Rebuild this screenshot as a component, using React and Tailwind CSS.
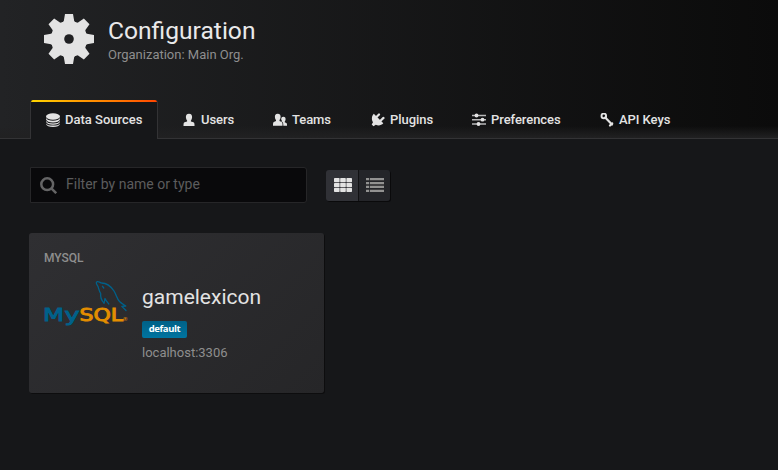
const ROBOTO = "font-['Roboto',sans-serif]";

function Gear() {
  const teeth = [0, 45, 90, 135, 180, 225, 270, 315];
  return (
    <svg className="size-[50px]" viewBox="-25 -25 50 50" fill="#e3e3e3">
      <mask id="hub">
        <rect x="-25" y="-25" width="50" height="50" fill="#fff" />
        <circle r="4.8" fill="#000" />
      </mask>
      <g mask="url(#hub)">
        <circle r="18" />
        {teeth.map((a) => (
          <path key={a} d="M-4-25H4L5.200-18Q6-16.500 8.500-15.500L0-8L-8.500-15.500Q-6-16.500-5.200-18Z" transform={`rotate(${a})`} />
        ))}
      </g>
    </svg>
  );
}

const ICON = "h-[14px] shrink-0 fill-[#e3e3e3]";

function DatabaseIcon() {
  return (
    <svg className={`${ICON} w-[14px]`} viewBox="0 0 14 14">
      <ellipse cx="7" cy="3.500" rx="7" ry="3.300" />
      <path d="M0 5Q1.600 7.700 7 7.700T14 5V6.300Q13 9.500 7 9.500T0 6.300ZM0 7.900Q1.600 10.400 7 10.400T14 7.900V8.800Q13 11.700 7 11.700T0 8.800ZM0 10.400Q1.600 12.600 7 12.600T14 10.400V11Q13 13.900 7 13.900T0 11Z" />
    </svg>
  );
}

function UserIcon() {
  return (
    <svg className={`${ICON} w-[12px]`} viewBox="0 0 12 14">
      <path d="M6 .7C8.400 .7 9.200 2.300 9.100 4.200C9 5.800 8.400 6.800 7.900 7.400V8.400L10.500 9.300Q11.500 9.700 11.500 11.700V13H.5V11.700Q.5 9.700 1.500 9.300L4.100 8.400V7.400C3.600 6.800 3 5.800 2.900 4.200C2.800 2.300 3.600 .7 6 .7Z" />
    </svg>
  );
}

function UsersIcon() {
  return (
    <svg className={`${ICON} w-[14px]`} viewBox="0 0 14 14">
      <path d="M4.700 .8C7 .8 7.700 2.300 7.600 4C7.500 5.600 7 6.500 6.500 7.100V8.100L8.700 9.100Q9.500 9.500 9.500 11.300V12.800H0V11.300Q0 9.500.8 9.100L3 8.100V7.100C2.500 6.500 2 5.600 1.900 4C1.800 2.300 2.500 .8 4.700 .8Z" />
      <path d="M10.300 3.700C12.200 3.700 12.700 5 12.600 6.300C12.500 7.600 12.100 8.200 11.700 8.700V9.300L13.300 10.100Q14 10.400 14 11.800V12.800H10.300V11.400Q10.300 9.300 9.200 8.800L8.200 8.200Q8.900 7.900 9.100 7.800Q8.300 7.300 8.200 6.300C8.100 5 8.700 3.700 10.300 3.700Z" />
    </svg>
  );
}

function PlugIcon() {
  return (
    <svg className={`${ICON} w-[14px]`} viewBox="0 0 14 14">
      <path d="M2.800 .8L12.300 10.300C10.300 12.800 6.900 12.700 4.800 11.800L2.500 13.300L.7 11.500L2 9.200C.5 7 .4 3.100 2.800 .8Z" />
      <path d="M5.200 4.300L8 1.500M9 8.200L12.500 4.900" stroke="#e3e3e3" strokeWidth="2.200" strokeLinecap="round" />
    </svg>
  );
}

function SlidersIcon() {
  return (
    <svg className={`${ICON} w-[14px]`} viewBox="0 0 14 14">
      <path d="M0 1.800H14V3.200H0ZM0 6H14V7.400H0ZM0 10.300H14V11.700H0Z" fill="#b8b8b9" />
      <circle cx="4.500" cy="2.500" r="1.900" />
      <circle cx="10.500" cy="6.700" r="1.900" />
      <circle cx="6.500" cy="11" r="1.900" />
    </svg>
  );
}

function KeyIcon() {
  return (
    <svg className={`${ICON} w-[14px]`} viewBox="0 0 14 14">
      <circle cx="3.800" cy="2.900" r="2.300" fill="none" stroke="#e3e3e3" strokeWidth="1.900" />
      <path d="M5.200 4.500L12 11.500M12.200 10.300L10 12.500" fill="none" stroke="#e3e3e3" strokeWidth="2.200" strokeLinecap="round" />
    </svg>
  );
}

const TABS = [
  { label: "Users", icon: <UserIcon />, place: "ml-[25px] w-[51px] gap-[6px]" },
  { label: "Teams", icon: <UsersIcon />, place: "ml-[39px] w-[59px] gap-[5px]" },
  { label: "Plugins", icon: <PlugIcon />, place: "ml-[39px] w-[62px] gap-[5px]" },
  { label: "Preferences", icon: <SlidersIcon />, place: "ml-[39px] w-[89px] gap-[5px]" },
  { label: "API Keys", icon: <KeyIcon />, place: "ml-[39px] w-[71px] gap-[5px]" },
];

function MySqlLogo() {
  return (
    <svg className="h-[50px] w-[84px]" viewBox="0 0 84 50" fontFamily="DejaVu Sans, sans-serif">
      <g fill="none" stroke="#00618a" strokeWidth="1.300" strokeLinejoin="round" strokeLinecap="round">
        <path d="M60 23C57.500 20.500 56.300 17 56.700 13.500C55 11 54.800 8.500 54 6.500C52.700 4.500 51.500 2.500 53 1.700C54.500 1 56 2.500 57.500 3C63 3 67 6.500 70 11C72.500 15 72.800 18.500 75.500 21.500C77.500 23.500 79.500 24.500 81.800 26L77.800 26.400L82 30.500" />
        <path d="M60 23C60.700 21.500 60.500 20 61 18.500C62 21 63.500 22.500 64.800 24" />
        <path d="M58.500 6.300L59.800 8" />
      </g>
      <g fontSize="17.500" strokeWidth=".9">
        <g fill="#00618a" stroke="#00618a">
          <text x="-1" y="40.500" textLength="21" lengthAdjust="spacingAndGlyphs">M</text>
          <text x="20.500" y="40.500" textLength="15" lengthAdjust="spacingAndGlyphs">y</text>
        </g>
        <text x="35.500" y="40.500" fill="#e48e00" stroke="#e48e00" textLength="43.500" lengthAdjust="spacingAndGlyphs">SQL</text>
      </g>
      <text x="78.500" y="41" fontSize="5.500" fill="#e48e00">®</text>
    </svg>
  );
}

export default function App() {
  return (
    <div className={`flex h-[470px] w-[778px] flex-col overflow-hidden bg-[#161719] text-[13px] text-[#d8d9da] ${ROBOTO}`}>
      <header className="flex h-[139px] shrink-0 flex-col border-b border-[#333335] bg-linear-to-r from-[#222325] to-[#0b0b0b]">
        <div className="flex flex-1 flex-col justify-between bg-linear-to-t from-[#212122] to-transparent to-[12px] pl-[30px]">
          <div className="flex items-start pt-[14px] pl-[14px]">
            <Gear />
            <div className="pl-[14px]">
              <h1 className="mt-[2px] text-[24.6px] leading-[30px] text-[#e9e9ea]">Configuration</h1>
              <p className="text-[13px] leading-[18px] text-[#8e8e8e]">Organization: Main Org.</p>
            </div>
          </div>
          <nav className="-mb-px flex items-stretch font-medium text-[#e3e3e3]">
            <div className="flex h-[39px] w-[128px] flex-col overflow-hidden rounded-t-[3px] border-x border-[#333335] bg-[#161719]">
              <div className="h-[2px] shrink-0 bg-linear-to-r from-[#ffd500] via-[#ff9900] via-40% to-[#ff4400]" />
              <div className="flex h-[35px] items-center gap-[5px] pl-[15px] whitespace-nowrap">
                <DatabaseIcon />
                Data Sources
              </div>
            </div>
            {TABS.map((t) => (
              <div key={t.label} className={`flex h-[39px] items-center tracking-[-0.06px] whitespace-nowrap ${t.place}`}>
                {t.icon}
                {t.label}
              </div>
            ))}
          </nav>
        </div>
      </header>
      <main className="pl-[29px]">
        <div className="flex items-center pt-[28px] pl-px">
          <div className="flex h-[36px] w-[277px] items-center rounded-r-[3px] border border-[#262628] bg-[#09090b] pl-[9px] text-[14px] text-[#5c5c5d]">
            <svg className="size-[17px]" viewBox="0 0 17 17" fill="none" stroke="#656566" strokeWidth="2.500">
              <circle cx="7.200" cy="7.200" r="5.900" />
              <path d="M11.400 11.400L16.200 16.200" />
            </svg>
            <span className="pb-[2px] pl-[9px]">Filter by name or type</span>
          </div>
          <div className="ml-[19px] flex h-[31px] w-[64px] overflow-hidden rounded-[3px] shadow-[1px_1px_0_#0a0a0b]">
            <div className="flex w-[33px] items-center justify-center border-r border-[#111113] bg-[#303136] pb-px pl-px">
              <svg className="h-[14px] w-[18px]" viewBox="0 0 18 14" fill="#e3e3e3">
                {[0, 4.9, 9.800].map((y) => [0, 6.2, 12.4].map((x) => (
                  <rect key={`${x}-${y}`} x={x} y={y} width="5.600" height="4.200" rx=".7" />
                )))}
              </svg>
            </div>
            <div className="flex flex-1 items-center bg-[#242529] pb-px pl-[7px]">
              <svg className="h-[14px] w-[18px]" viewBox="0 0 18 14" fill="#929291">
                {[0, 3.9, 7.8, 11.700].map((y) => (
                  <path key={y} d={`M0 ${y}h3v2.300h-3ZM3.800 ${y}h14.200v2.300h-14.200Z`} />
                ))}
              </svg>
            </div>
          </div>
        </div>
        <section className="mt-[30px] h-[160px] w-[295px] rounded-[3px] bg-linear-135 from-[#2f2f32] to-[#262628] pt-[16px] pl-[15px] shadow-[1px_1px_0_#0d0d0e]">
          <h2 className="text-[12px] leading-[18px] font-medium text-[#8e8e8e]">MYSQL</h2>
          <div className="flex gap-[14px] pt-[13px]">
            <MySqlLogo />
            <div className="flex flex-col items-start">
              <div className="mt-[4px] text-[21px] leading-[26px] text-[#e3e3e3]">gamelexicon</div>
              <span className="mt-[11px] flex h-[17px] w-[45px] items-center justify-center rounded-[2px] bg-linear-to-b from-[#006187] to-[#0074a0] pb-px font-['Open_Sans',sans-serif] text-[9.5px] font-bold tracking-[-0.4px] text-white">default</span>
              <div className="mt-[5px] text-[13px] leading-[20px] text-[#8e8e8e]">localhost:3306</div>
            </div>
          </div>
        </section>
      </main>
    </div>
  );
}
